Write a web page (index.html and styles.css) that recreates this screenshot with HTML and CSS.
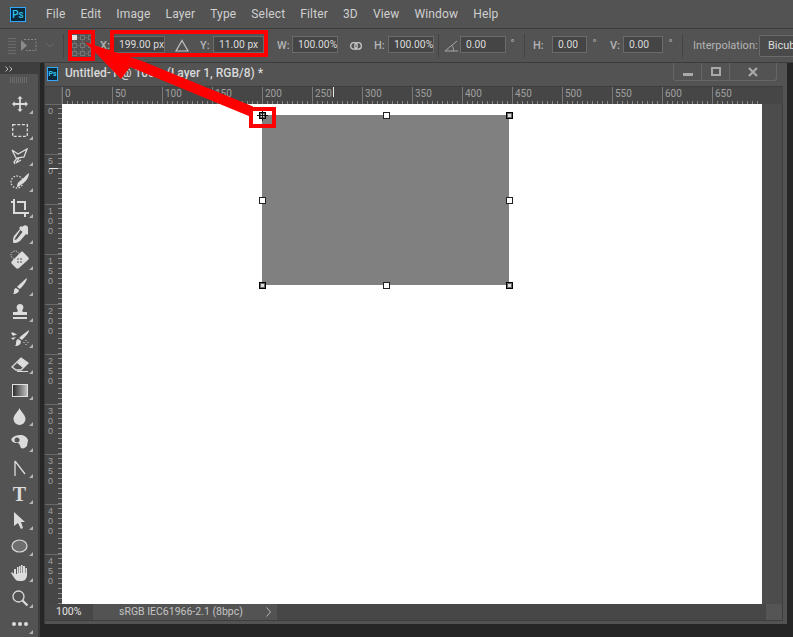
FILE: index.html
```html
<!DOCTYPE html>
<html lang="en">
<head>
  <meta charset="UTF-8">
  <title>Photoshop transform</title>
  <link rel="stylesheet" href="styles.css">
</head>
<body>
  <div class="menubar">
    <div class="ps-logo">Ps</div>
    <nav class="menu">
      <span>File</span><span>Edit</span><span>Image</span><span>Layer</span><span>Type</span><span>Select</span><span>Filter</span><span>3D</span><span>View</span><span>Window</span><span>Help</span>
    </nav>
  </div>

  <div class="optionsbar">
    <div class="grip"></div>
    <svg class="opt-transform" width="17" height="15" viewBox="0 0 17 15"><path d="M0 2l6 5.500-6 5.500z" fill="#8a8a8a"/><path d="M3 1.500h12v11H5" fill="none" stroke="#8a8a8a" stroke-dasharray="2 1.500"/></svg>
    <svg class="opt-chevron" width="8" height="5" viewBox="0 0 8 5"><path d="M.5.500L4 4 7.500.500" fill="none" stroke="#6a6a6a"/></svg>
    <div class="divider div-a"></div>
    <div class="refpoint">
      <i class="on"></i><i></i><i></i><i></i><i></i><i></i><i></i><i></i><i></i>
    </div>
    <span class="lbl lbl-x">X:</span>
    <span class="field f-x">199.00 px</span>
    <svg class="opt-delta" width="14" height="13" viewBox="0 0 14 13"><path d="M7 1.500L13 12H1z" fill="none" stroke="#c4c4c4" stroke-width="1.200"/></svg>
    <span class="lbl lbl-y">Y:</span>
    <span class="field f-y">11.00 px</span>
    <span class="lbl lbl-w">W:</span>
    <span class="field f-w">100.00%</span>
    <svg class="opt-link" width="12" height="8" viewBox="0 0 12 8"><rect x=".7" y=".7" width="6.500" height="6.500" rx="3" fill="none" stroke="#c8c8c8" stroke-width="1.300"/><rect x="4.800" y=".7" width="6.500" height="6.500" rx="3" fill="none" stroke="#c8c8c8" stroke-width="1.300"/></svg>
    <span class="lbl lbl-h">H:</span>
    <span class="field f-h">100.00%</span>
    <div class="divider div-b"></div>
    <svg class="opt-angle" width="14" height="12" viewBox="0 0 14 12"><path d="M13 1L1 11h13M8 5.500c1 1.500 1.500 3 1.500 5.500" fill="none" stroke="#a8a8a8"/></svg>
    <span class="field f-a">0.00</span>
    <span class="deg deg-a">°</span>
    <div class="divider div-c"></div>
    <span class="lbl lbl-sh">H:</span>
    <span class="field f-sh">0.00</span>
    <span class="deg deg-sh">°</span>
    <span class="lbl lbl-v">V:</span>
    <span class="field f-v">0.00</span>
    <span class="deg deg-v">°</span>
    <div class="divider div-d"></div>
    <span class="lbl lbl-i">Interpolation:</span>
    <span class="select">Bicubic</span>
  </div>

  <div class="workspace">
    <aside class="toolbar">
      <div class="tool-head">
        <svg width="8" height="6" viewBox="0 0 8 6"><path d="M.5.500L3 3 .5 5.500M4.500.500L7 3 4.500 5.500" fill="none" stroke="#c0c0c0"/></svg>
      </div>
      <div class="tool-grip"></div>
      <div class="tool"><svg width="16" height="16" viewBox="0 0 18 18"><path d="M9 0l3 3h-2v5h5V6l3 3-3 3v-2h-5v5h2l-3 3-3-3h2v-5H3v2L0 9l3-3v2h5V3H6z"/></svg></div>
      <div class="tool"><svg width="16" height="13" viewBox="0 0 16 13"><path d="M.7.700h14.600v11.600H.7z" fill="none" stroke="#dcdcdc" stroke-width="1.300" stroke-dasharray="3 1.600"/></svg></div>
      <div class="tool"><svg width="17" height="17" viewBox="0 0 17 17"><path d="M1 2l6 4 9-5-3 8-7 1-3 4 1 2M1 2l4 8M8 10l-3 5 5-3" fill="none" stroke="#dcdcdc" stroke-width="1.300"/></svg></div>
      <div class="tool"><svg width="20" height="18" viewBox="0 0 20 18"><circle cx="7" cy="9" r="6" fill="none" stroke="#dcdcdc" stroke-width="1.300" stroke-dasharray="1.500 1.500"/><path d="M19 0c0 4-3 9-7 11-2 1-3 3-5 3 0-3 1-5 3-6 3-2 6-6 9-8z"/></svg></div>
      <div class="tool"><svg width="18" height="18" viewBox="0 0 18 18"><path d="M0 3h3V0M3 3v11h11v4M6 3h8v8M14 14h4" fill="none" stroke="#dcdcdc" stroke-width="2"/></svg></div>
      <div class="tool"><svg width="16" height="19" viewBox="0 0 16 19"><path d="M15 1c-2-2-4 0-5 1l-1-1-2 2 1 1-6 7c-1 2-1 4-1 6 0 1 1 1 2 1 2 0 3-1 5-2l6-7 1 1 2-2-1-1c1-1 1-3 0-5zM8.500 5l2 2-5.500 7-2 1-.5-.5 1-2z"/></svg></div>
      <div class="tool"><svg width="20" height="20" viewBox="0 0 20 20"><path d="M13 2l5 5c1 1 1 2 0 3L9 18c-1 1-2 1-3 0l-4-4c-1-1-1-2 0-3l8-8c1-1 2-2 3-1z"/><path d="M8 8l1 1-1 1-1-1zM11 8l1 1-1 1-1-1zM8 11l1 1-1 1-1-1zM11 11l1 1-1 1-1-1z" fill="#555"/><circle cx="5" cy="5" r="4" fill="none" stroke="#dcdcdc" stroke-dasharray="1.200 1.200"/></svg></div>
      <div class="tool"><svg width="15" height="16" viewBox="0 0 15 16"><path d="M15 0c0 3-4 8-7 11l-3-2c3-3 7-7 10-9zM4 10l3 2c0 2-2 4-6 4 1-1 1-2 1-3 0-2 1-3 2-3z"/></svg></div>
      <div class="tool"><svg width="16" height="16" viewBox="0 0 16 16"><path d="M5 5c-1-2 0-5 3-5s4 3 3 5c-1 1-1 2 0 3h4v3H1V8h4c1-1 1-2 0-3zM1 13h14v2H1z"/></svg></div>
      <div class="tool"><svg width="20" height="17" viewBox="0 0 20 17"><path d="M19 0c0 3-4 7-7 10L9 8c3-3 7-6 10-8zM8 9l3 2c0 3-2 5-6 5 1-1 1-2 1-3 0-2 1-4 2-4zM1 3c2-1 4 0 6 2-2 0-3 0-4 1zM1 8l5-1-3 3z"/><path d="M14 12v1M16 10v1M16 14v1M18 12v1" stroke="#dcdcdc"/></svg></div>
      <div class="tool"><svg width="18" height="15" viewBox="0 0 18 15"><path d="M10 1l7 5-7 7H5L1 10z" fill="none" stroke="#dcdcdc" stroke-width="1.300"/><path d="M10 1l7 5-5 5-6-5z"/><path d="M6 14.500h11" stroke="#dcdcdc"/></svg></div>
      <div class="tool"><div class="gradient-icon"></div></div>
      <div class="tool"><svg width="13" height="17" viewBox="0 0 13 17"><path d="M6.500 0c1 3 6 7 6 11a6 6 0 0 1-12 0c0-4 5-8 6-11z"/></svg></div>
      <div class="tool"><svg width="17" height="14" viewBox="0 0 17 14"><path d="M1 3c2-2 5-3 8-3 4 0 7 2 8 5 0 2-1 4-1 6-2 2-4 3-6 2-1-2-1-4-3-5-2 0-4 0-5-1C0 6 0 4 1 3z"/><circle cx="6" cy="5" r="2.500" fill="#555"/></svg></div>
      <div class="tool"><svg width="12" height="17" viewBox="0 0 12 17"><path d="M1 1v15M1 1l10 13" fill="none" stroke="#dcdcdc" stroke-width="1.300"/></svg></div>
      <div class="tool tool-type">T</div>
      <div class="tool"><svg width="12" height="17" viewBox="0 0 12 17"><path d="M0 0l11 10H7l2 6-2 1-3-6-4 3z"/></svg></div>
      <div class="tool"><svg width="17" height="14" viewBox="0 0 17 14"><ellipse cx="8.500" cy="7" rx="7.500" ry="6" fill="#6f6f6f" stroke="#dcdcdc" stroke-width="1.200"/></svg></div>
      <div class="tool"><svg width="17" height="17" viewBox="0 0 17 17"><path d="M3 5v5L1 8 0 9l4 6c1 1 2 2 4 2h3c3 0 5-3 5-6V4h-1.500v5h-.5V2H12v7h-.5V1H10v8h-.5V2H8v7h-.5V3H6v7H5V5z"/></svg></div>
      <div class="tool"><svg width="16" height="16" viewBox="0 0 16 16"><circle cx="6.500" cy="6.500" r="5.500" fill="none" stroke="#dcdcdc" stroke-width="1.300"/><path d="M10.500 10.500l5 5" stroke="#dcdcdc" stroke-width="2.200"/></svg></div>
      <div class="tool tool-more"><b></b><b></b><b></b></div>
    </aside>

    <main class="docwindow">
      <div class="doc-title">
        <div class="doc-icon">Ps</div>
        <span class="doc-name">Untitled-1 @ 100% (Layer 1, RGB/8) *</span>
        <div class="win-buttons">
          <span class="win-btn"><i class="win-min"></i></span>
          <span class="win-btn"><i class="win-max"></i></span>
          <span class="win-btn win-close">
            <svg width="10" height="10" viewBox="0 0 10 10"><path d="M1 1l8 8M9 1l-8 8" stroke="#a8a8a8" stroke-width="2.200"/></svg>
          </span>
        </div>
      </div>

      <div class="ruler-h">
        <div class="ruler-corner"></div>
        <div class="ruler-scale">
          <span>0</span><span>50</span><span>100</span><span>150</span><span>200</span><span>250</span><span>300</span><span>350</span><span>400</span><span>450</span><span>500</span><span>550</span><span>600</span><span>650</span>
          <i class="mark-h"></i>
        </div>
      </div>

      <div class="doc-body">
        <div class="ruler-v">
          <span>0</span><span>5<br>0</span><span>1<br>0<br>0</span><span>1<br>5<br>0</span><span>2<br>0<br>0</span><span>2<br>5<br>0</span><span>3<br>0<br>0</span><span>3<br>5<br>0</span><span>4<br>0<br>0</span><span>4<br>5<br>0</span>
          <i class="mark-v"></i>
        </div>
        <div class="canvas">
          <div class="layer">
            <i class="handle corner h-tl"></i><i class="handle h-tc"></i><i class="handle corner h-tr"></i>
            <i class="handle h-ml"></i><i class="handle h-mr"></i>
            <i class="handle corner h-bl"></i><i class="handle h-bc"></i><i class="handle corner h-br"></i>
          </div>
        </div>
        <div class="scroll-v"></div>
      </div>

      <div class="statusbar">
        <span class="zoom">100%</span>
        <div class="status-info">
          <span class="profile">sRGB IEC61966-2.1 (8bpc)</span>
          <svg width="5" height="10" viewBox="0 0 5 10"><path d="M.5.500L4.500 5 .5 9.500" fill="none" stroke="#b8b8b8"/></svg>
        </div>
        <div class="scroll-corner"></div>
      </div>
    </main>
  </div>

  <!-- annotations on top of the screenshot -->
  <div class="mark mark-ref"></div>
  <div class="mark mark-xy"></div>
  <div class="mark mark-handle"></div>
  <svg class="arrow" width="793" height="637" viewBox="0 0 793 637">
    <path d="M85 42L142 61 253 106.500 250 116.500 130 67 121 79z" fill="#ff0000"/>
  </svg>
</body>
</html>
```

FILE: styles.css
```css
html, body {
  margin: 0;
  height: 100%;
}
body {
  position: relative;
  width: 793px;
  height: 637px;
  overflow: hidden;
  background-color: #262626;
  font-family: Roboto, sans-serif;
  color: #d0d0d0;
  display: flex;
  flex-direction: column;
}

/* menu */
.menubar {
  height: 28px;
  flex: none;
  display: flex;
  align-items: center;
  background-color: #535353;
  border-bottom: 1px solid #3c3c3c;
}
.ps-logo {
  width: 14px;
  height: 13px;
  margin-left: 10px;
  border: 1px solid #31a8ff;
  background-color: #0a2a3c;
  color: #31c5f0;
  font-size: 10px;
  font-weight: 500;
  line-height: 13px;
  text-align: center;
}
.menu {
  display: flex;
  gap: 15px;
  margin-left: 20px;
  font-size: 12px;
  letter-spacing: .15px;
}

/* options */
.optionsbar {
  height: 33px;
  flex: none;
  display: flex;
  align-items: center;
  background-color: #535353;
  border-bottom: 1px solid #3c3c3c;
  font-size: 11px;
  color: #b4b4b4;
}
.optionsbar > * { flex: none; }
.grip {
  width: 8px;
  height: 16px;
  margin-left: 8px;
  background: repeating-linear-gradient(0deg, #6a6a6a 0 1px, transparent 1px 3px);
}
.opt-transform { margin-left: 5px; }
.opt-chevron { margin-left: 8px; }
.divider {
  width: 1px;
  height: 24px;
  background-color: #444;
}
.div-a { margin-left: 9px; }
.refpoint {
  display: grid;
  grid-template-columns: repeat(3, 5px);
  gap: 3px;
  margin-left: 8px;
  width: 21px;
  height: 21px;
  background-image:
    repeating-linear-gradient(180deg, transparent 0 2px, #6a6a6a 2px 3px, transparent 3px 8px),
    repeating-linear-gradient(90deg, transparent 0 2px, #6a6a6a 2px 3px, transparent 3px 8px);
}
.refpoint i {
  height: 5px;
  border: 1px solid #767676;
  box-sizing: border-box;
  background-color: #535353;
}
.refpoint .on {
  background-color: #e4e4e4;
  border-color: #e4e4e4;
}
.lbl { font-weight: 500; }
.field {
  height: 17px;
  margin-top: -2px;
  box-sizing: border-box;
  border: 1px solid #6a6a6a;
  background-color: #454545;
  color: #dcdcdc;
  font-size: 10.300px;
  line-height: 15px;
  padding-left: 5px;
  white-space: nowrap;
}
.lbl-x { margin-left: 7px; width: 13px; }
.f-x { width: 52px; }
.opt-delta { margin-left: 10px; }
.lbl-y { margin-left: 11px; width: 13px; }
.f-y { width: 51px; }
.lbl-w { margin-left: 13px; width: 15px; }
.f-w { width: 46px; }
.opt-link { margin-left: 12px; }
.lbl-h { margin-left: 12px; width: 14px; }
.f-h { width: 46px; }
.div-b { margin-left: 4px; }
.opt-angle { margin-left: 5px; }
.f-a { margin-left: 2px; width: 46px; }
.deg { margin-top: -5px; width: 5px; text-align: center; }
.deg-a { margin-left: 4px; }
.div-c { margin-left: 9px; }
.lbl-sh { margin-left: 8px; width: 19px; }
.f-sh { width: 35px; }
.deg-sh { margin-left: 5px; }
.lbl-v { margin-left: 13px; width: 13px; }
.f-v { width: 40px; }
.deg-v { margin-left: 5px; }
.div-d { margin-left: 9px; }
.lbl-i { margin-left: 10px; width: 66px; white-space: nowrap; font-weight: 400; }
.select {
  width: 60px;
  height: 20px;
  margin-top: 1px;
  border: 1px solid #6a6a6a;
  border-radius: 2px;
  background-color: #4a4a4a;
  color: #dcdcdc;
  line-height: 20px;
  padding-left: 8px;
}

/* tools */
.workspace {
  flex: 1;
  display: flex;
  min-height: 0;
}
.toolbar {
  width: 38px;
  flex: none;
  display: flex;
  flex-direction: column;
  background-color: #535353;
  border-right: 2px solid #3e3e3e;
}
.tool-head {
  height: 11px;
  display: flex;
  align-items: center;
  padding-left: 5px;
  background-color: #3e3e3e;
}
.tool-grip {
  height: 6px;
  margin: 3px 10px 8px;
  background: repeating-linear-gradient(90deg, #6c6c6c 0 1px, transparent 1px 2px);
}
.tool {
  position: relative;
  height: 26px;
  flex: none;
  display: flex;
  align-items: center;
  justify-content: center;
  padding-left: 1px;
}
.tool svg { fill: #dcdcdc; }
.tool::after {
  content: "";
  position: absolute;
  right: 5px;
  bottom: 3px;
  border-style: solid;
  border-width: 0 0 4px 4px;
  border-color: transparent transparent #b4b4b4 transparent;
}
.gradient-icon {
  width: 14px;
  height: 11px;
  border: 1px solid #e0e0e0;
  background: linear-gradient(90deg, #2e2e2e, #c0c0c0);
}
.tool-type {
  font-family: "Liberation Serif", serif;
  font-size: 20px;
  font-weight: 700;
  color: #dcdcdc;
}
.tool-more { gap: 2px; }
.tool-more b {
  width: 4px;
  height: 4px;
  border-radius: 50%;
  background-color: #dcdcdc;
}

/* document window */
.docwindow {
  width: 738px;
  height: 557px;
  flex: none;
  margin-left: 4px;
  padding-right: 4px;
  padding-bottom: 4px;
  display: flex;
  flex-direction: column;
  background-color: #535353;
  border-left: 1px solid #3a3a3a;
}
.doc-title {
  height: 23px;
  flex: none;
  display: flex;
  align-items: flex-start;
  border-bottom: 1px solid #3e3e3e;
  margin-left: -1px;
  padding-left: 3px;
}
.doc-icon {
  width: 9px;
  height: 12px;
  margin-top: 4px;
  border: 1px solid #31a8ff;
  background-color: #0a2a3c;
  color: #31c5f0;
  font-size: 7px;
  font-weight: 700;
  line-height: 12px;
  text-align: center;
}
.doc-name {
  margin-left: 7px;
  margin-top: 3px;
  font-size: 12px;
  font-weight: 500;
  color: #d8d8d8;
  white-space: nowrap;
}
.win-buttons {
  display: flex;
  margin-left: auto;
  margin-right: 6px;
  height: 18px;
  border: 1px solid #666;
  border-top: 0;
  border-radius: 0 0 3px 3px;
  box-sizing: border-box;
}
.win-btn {
  width: 27px;
  display: flex;
  align-items: center;
  justify-content: center;
  border-right: 1px solid #666;
}
.win-close {
  width: 46px;
  border-right: 0;
}
.win-min {
  width: 10px;
  height: 3px;
  margin-top: 6px;
  background-color: #a8a8a8;
}
.win-max {
  width: 6px;
  height: 5px;
  border: 2px solid #a8a8a8;
}

/* rulers */
.ruler-h {
  height: 17px;
  flex: none;
  display: flex;
  background-color: #464646;
}
.ruler-corner {
  width: 17px;
  flex: none;
  background-color: #4a4a4a;
  border-right: 1px solid #5a5a5a;
  box-sizing: border-box;
}
.ruler-scale {
  position: relative;
  width: 700px;
  display: flex;
  overflow: hidden;
  background-image: repeating-linear-gradient(90deg, #8a8a8a 0 1px, transparent 1px 5px);
  background-size: 100% 3px;
  background-repeat: no-repeat;
  background-position: bottom left;
}
.ruler-scale span {
  width: 50px;
  flex: none;
  box-sizing: border-box;
  padding-left: 2px;
  border-left: 1px solid #7a7a7a;
  height: 17px;
  font-size: 10px;
  line-height: 14px;
  color: #a0a0a0;
}
.mark-h {
  position: absolute;
  left: 271px;
  top: 0;
  width: 1px;
  height: 10px;
  background-color: #e8e8e8;
}
.doc-body {
  height: 500px;
  flex: none;
  display: flex;
}
.ruler-v {
  position: relative;
  width: 17px;
  flex: none;
  background-color: #464646;
  background-image: repeating-linear-gradient(0deg, #8a8a8a 0 1px, transparent 1px 5px);
  background-size: 4px 100%;
  background-repeat: no-repeat;
  background-position: top right;
}
.ruler-v span {
  display: block;
  height: 50px;
  box-sizing: border-box;
  padding-left: 3px;
  padding-top: 1px;
  border-top: 1px solid #6a6a6a;
  font-family: "Liberation Sans", sans-serif;
  font-size: 9px;
  line-height: 10px;
  color: #a0a0a0;
}
.mark-v {
  position: absolute;
  top: 64px;
  left: 4px;
  width: 9px;
  height: 1px;
  background-color: #e8e8e8;
}
.canvas {
  position: relative;
  width: 700px;
  flex: none;
  background-color: #fff;
}
.layer {
  position: absolute;
  left: 200px;
  top: 11px;
  width: 247px;
  height: 170px;
  background-color: #808080;
}
.handle {
  position: absolute;
  width: 5px;
  height: 5px;
  background-color: #fff;
  border: 1px solid #222;
  margin: -3px 0 0 -3px;
}
.corner {
  background-color: #ddd;
  border-color: #000;
  box-shadow: inset 0 0 0 1px #666;
}
.h-tl::before, .h-tl::after {
  content: "";
  position: absolute;
  background-color: #111;
}
.h-tl::before { left: -3px; top: 2px; width: 11px; height: 1px; }
.h-tl::after { left: 2px; top: -3px; width: 1px; height: 11px; }
.h-tc, .h-tl, .h-tr { top: 0; }
.h-ml, .h-mr { top: 50%; }
.h-bl, .h-bc, .h-br { top: 100%; }
.h-tl, .h-ml, .h-bl { left: 0; }
.h-tc, .h-bc { left: 50%; }
.h-tr, .h-mr, .h-br { left: 100%; }
.scroll-v {
  flex: 1;
  background-color: #4c4c4c;
  border-right: 1px solid #3e3e3e;
}

/* status */
.statusbar {
  height: 16px;
  flex: none;
  display: flex;
  background-color: #474747;
  border-bottom: 1px solid #3e3e3e;
  border-right: 1px solid #3e3e3e;
  font-size: 10.500px;
  line-height: 16px;
  color: #c4c4c4;
}
.zoom {
  width: 37px;
  flex: none;
  padding-left: 11px;
  color: #e4e4e4;
}
.status-info {
  width: 184px;
  flex: none;
  display: flex;
  align-items: center;
  padding-left: 26px;
  box-sizing: border-box;
  background-color: #535353;
}
.profile {
  width: 147px;
  flex: none;
  white-space: nowrap;
}
.scroll-corner {
  width: 16px;
  flex: none;
  margin-left: auto;
  background-color: #555;
}

/* red annotations */
.mark {
  position: absolute;
  box-sizing: border-box;
  border: 4px solid #ff0000;
}
.mark-ref { left: 68px; top: 30px; width: 27px; height: 31px; }
.mark-xy { left: 110px; top: 30px; width: 158px; height: 27px; }
.mark-handle { left: 249px; top: 107px; width: 27px; height: 21px; }
.arrow {
  position: absolute;
  left: 0;
  top: 0;
  pointer-events: none;
}
```
